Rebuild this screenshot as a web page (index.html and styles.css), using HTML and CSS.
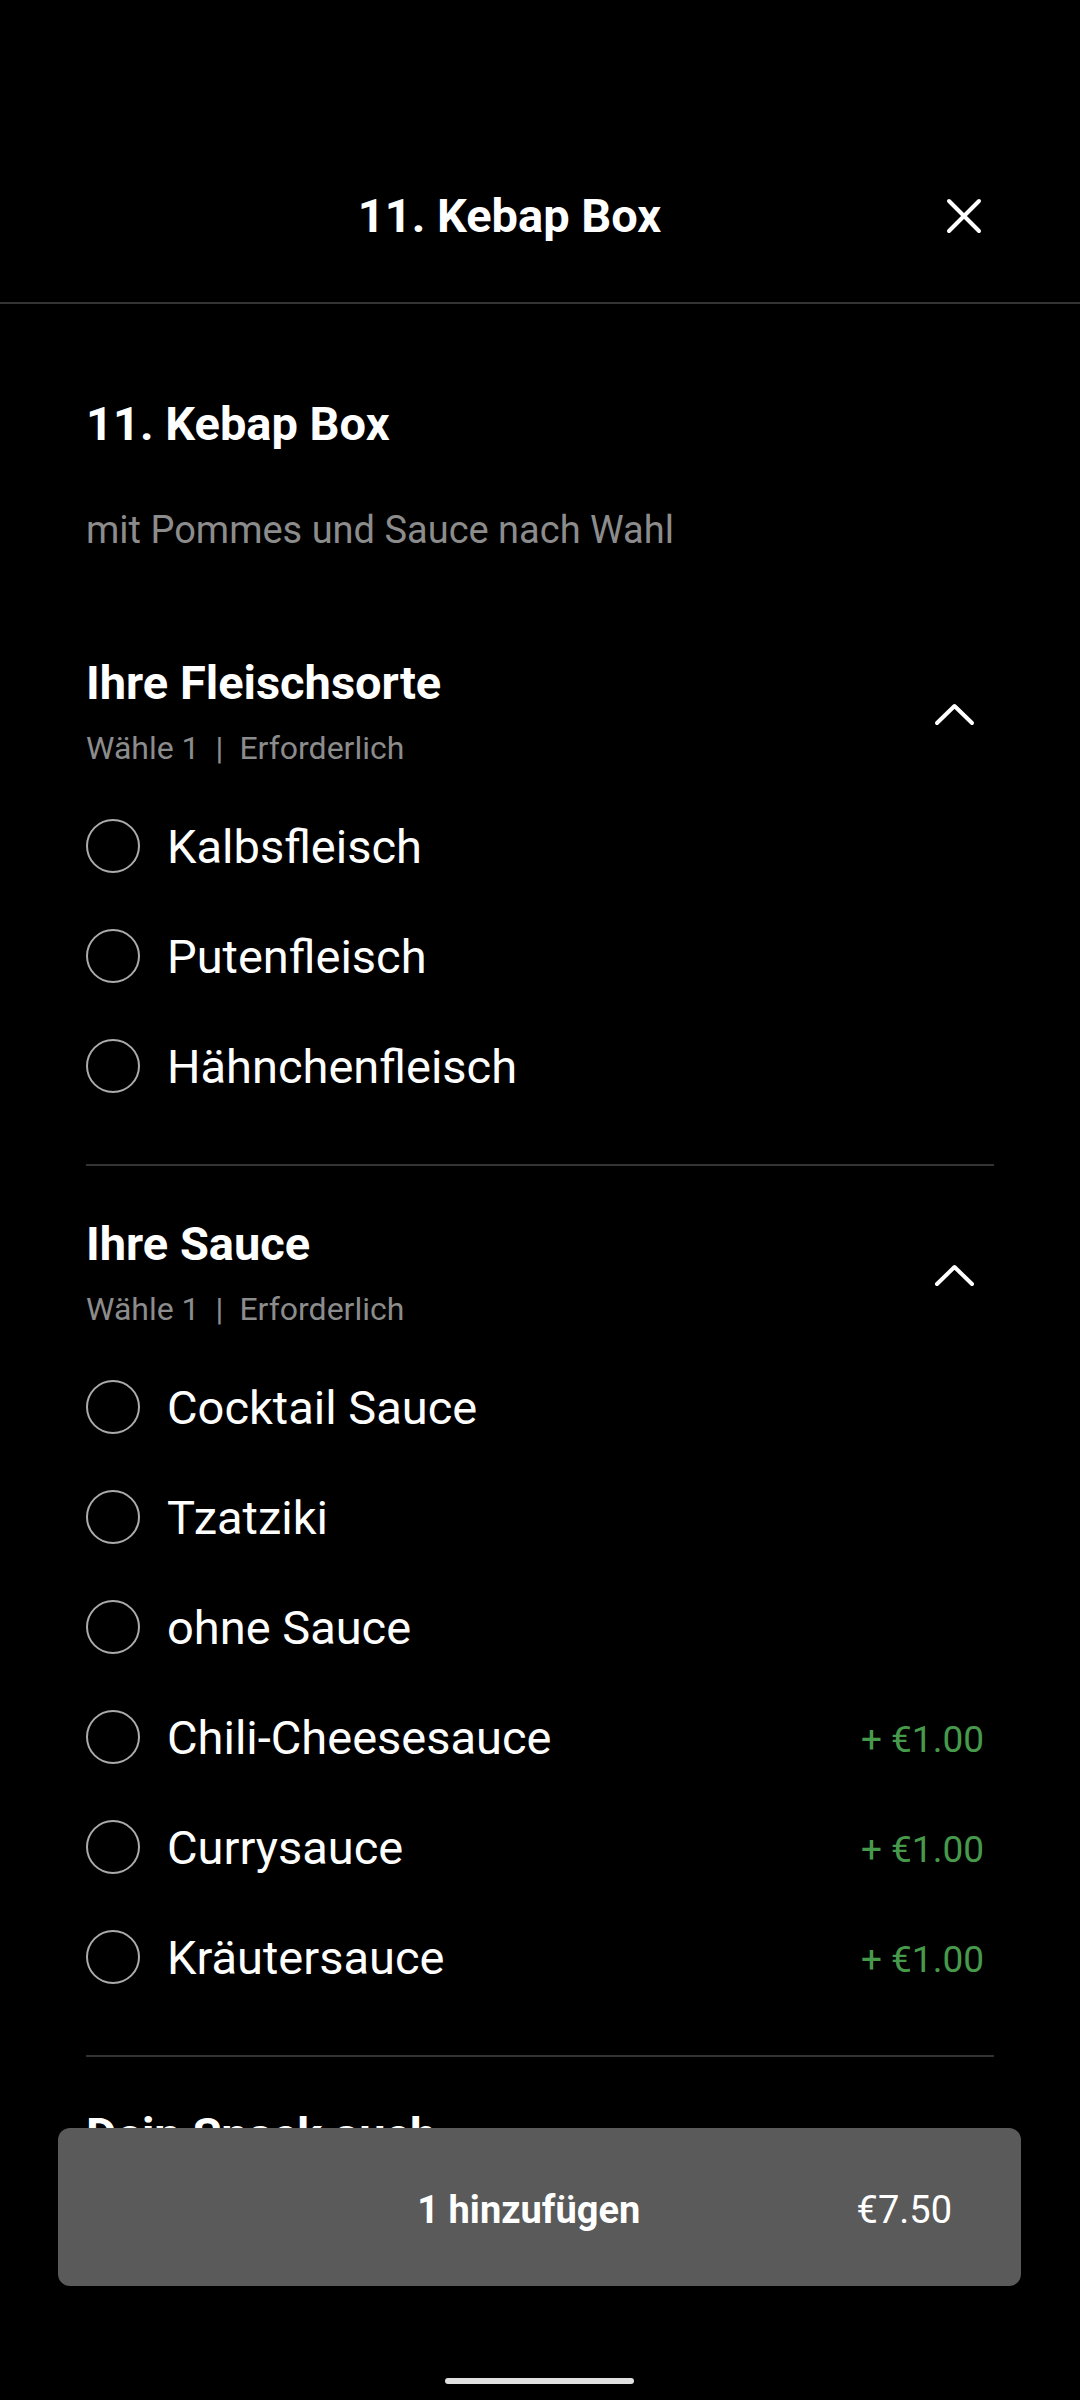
FILE: index.html
```html
<!DOCTYPE html>
<html lang="de">
<head>
<meta charset="utf-8">
<title>11. Kebap Box</title>
<link rel="stylesheet" href="styles.css">
</head>
<body>
<div class="screen">
  <div class="statusbar"></div>
  <header class="header">
    <h1 class="header-title">11. Kebap Box</h1>
    <svg class="close" viewBox="0 0 36 36" width="36" height="36" aria-label="Schließen">
      <path d="M3 3 L33 33 M33 3 L3 33" stroke="#fff" stroke-width="4" stroke-linecap="round" fill="none"/>
    </svg>
  </header>

  <main class="content">
    <h2 class="item-title">11. Kebap Box</h2>
    <p class="item-desc">mit Pommes und Sauce nach Wahl</p>

    <section class="group">
      <div class="group-head">
        <div class="group-text">
          <h3 class="group-title">Ihre Fleischsorte</h3>
          <div class="group-sub">Wähle 1<span class="sep">|</span>Erforderlich</div>
        </div>
        <svg class="chevron" viewBox="0 0 41 24" width="41" height="24">
          <polyline points="3,20 20.5,3 38,20" stroke="#fff" stroke-width="4" stroke-linecap="round" stroke-linejoin="round" fill="none"/>
        </svg>
      </div>
      <ul class="options">
        <li class="option"><span class="radio"></span><span class="label">Kalbsfleisch</span></li>
        <li class="option"><span class="radio"></span><span class="label">Putenfleisch</span></li>
        <li class="option"><span class="radio"></span><span class="label">Hähnchenfleisch</span></li>
      </ul>
    </section>

    <section class="group">
      <div class="group-head">
        <div class="group-text">
          <h3 class="group-title">Ihre Sauce</h3>
          <div class="group-sub">Wähle 1<span class="sep">|</span>Erforderlich</div>
        </div>
        <svg class="chevron" viewBox="0 0 41 24" width="41" height="24">
          <polyline points="3,20 20.5,3 38,20" stroke="#fff" stroke-width="4" stroke-linecap="round" stroke-linejoin="round" fill="none"/>
        </svg>
      </div>
      <ul class="options">
        <li class="option"><span class="radio"></span><span class="label">Cocktail Sauce</span></li>
        <li class="option"><span class="radio"></span><span class="label">Tzatziki</span></li>
        <li class="option"><span class="radio"></span><span class="label">ohne Sauce</span></li>
        <li class="option"><span class="radio"></span><span class="label">Chili-Cheesesauce</span><span class="price">+ €1.00</span></li>
        <li class="option"><span class="radio"></span><span class="label">Currysauce</span><span class="price">+ €1.00</span></li>
        <li class="option"><span class="radio"></span><span class="label">Kräutersauce</span><span class="price">+ €1.00</span></li>
      </ul>
    </section>

    <section class="group group-last">
      <div class="group-head">
        <div class="group-text">
          <h3 class="group-title">Dein Snack auch</h3>
        </div>
      </div>
    </section>
  </main>

  <button class="add-btn">
    <span class="add-label">1 hinzufügen</span>
    <span class="add-price">€7.50</span>
  </button>
  <div class="home-indicator"></div>
</div>
</body>
</html>
```

FILE: styles.css
```css
* { box-sizing: border-box; }

html, body {
  margin: 0;
  padding: 0;
  background: #000;
}

body {
  font-family: Roboto, "Noto Sans", "Liberation Sans", sans-serif;
  color: #fff;
}

.screen {
  position: relative;
  width: 1080px;
  height: 2400px;
  overflow: hidden;
  background: #000;
}

.statusbar {
  height: 130px;
}

.header {
  display: flex;
  align-items: center;
  height: 174px;
  padding: 0 98px 0 73px;
  border-bottom: 2px solid #333;
}

.header-title {
  flex: 1;
  margin: 0;
  text-align: center;
  font-size: 47px;
  font-weight: 700;
  line-height: 56px;
}

.close {
  display: block;
  flex: none;
}

.content {
  padding: 0 86px;
}

.item-title {
  margin: 92px 0 0;
  font-size: 47px;
  font-weight: 700;
  line-height: 56px;
}

.item-desc {
  margin: 54px 0 0;
  font-size: 38px;
  line-height: 48px;
  color: #8c8c8c;
}

.group {
  padding: 50px 0 43px;
  border-bottom: 2px solid #333;
}

.content .item-desc + .group {
  margin-top: 51px;
  padding-top: 50px;
}

.group-head {
  display: flex;
  align-items: center;
}

.group-text {
  flex: 1;
}

.group-title {
  margin: 0;
  font-size: 47px;
  font-weight: 700;
  line-height: 56px;
}

.group-sub {
  margin-top: 17px;
  font-size: 32px;
  line-height: 40px;
  color: #8c8c8c;
}

.sep {
  margin: 0 16px;
}

.chevron {
  display: block;
  flex: none;
  margin: 7px 19px 0 0;
}

.options {
  list-style: none;
  margin: 23px 0 0;
  padding: 0;
}

.option {
  display: flex;
  align-items: center;
  height: 110px;
}

.radio {
  flex: none;
  width: 54px;
  height: 54px;
  border: 2px solid #ababab;
  border-radius: 50%;
}

.label {
  flex: 1;
  margin-left: 27px;
  font-size: 47px;
  line-height: 110px;
  padding-top: 2px;
}

.price {
  flex: none;
  margin-right: 10px;
  font-size: 37px;
  color: #479a4c;
  padding-top: 4px;
}

.group-last {
  border-bottom: none;
}

.add-btn {
  position: absolute;
  left: 58px;
  right: 59px;
  bottom: 114px;
  height: 158px;
  display: flex;
  align-items: center;
  padding: 6px 69px 0 143px;
  border: none;
  border-radius: 12px;
  background: #5a5a5a;
  color: #fff;
  font-family: Roboto, "Noto Sans", "Liberation Sans", sans-serif;
}

.add-label {
  flex: 1;
  text-align: center;
  font-size: 38px;
  font-weight: 700;
}

.add-price {
  flex: none;
  font-size: 38px;
  font-weight: 400;
}

.home-indicator {
  position: absolute;
  left: 445px;
  bottom: 16px;
  width: 189px;
  height: 6px;
  border-radius: 3px;
  background: #e0e0e0;
}
```
